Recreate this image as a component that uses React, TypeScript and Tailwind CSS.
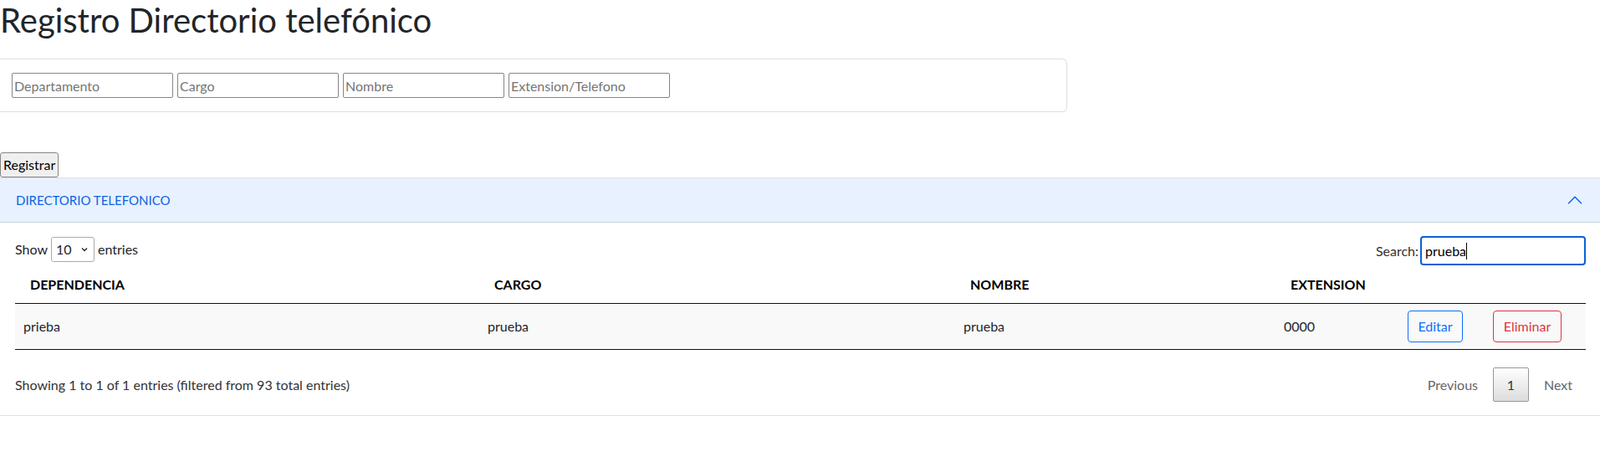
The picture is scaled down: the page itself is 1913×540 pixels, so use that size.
import * as React from 'react';

const cols = 'grid grid-cols-[555px_569px_383px_148px_102px_121px]';

const rows = [
  { dep: 'prieba', cargo: 'prueba', nombre: 'prueba', ext: '0000' },
];

export default function App() {
  return (
    <div className="min-h-[540px] bg-white text-[#212529] font-['Segoe_UI','Lato',sans-serif] text-[16px]">
      <h1 className="text-[40px] leading-[48px] font-normal">
        Registro Directorio telefónico
      </h1>

      {/* formulario */}
      <div className="mt-[22px] w-[1276px] h-[64px] border border-l-0 border-[#dfdfdf] rounded-r-[6px] pl-[14px] pt-[16px] flex gap-[5px]">
        {['Departamento', 'Cargo', 'Nombre', 'Extension/Telefono'].map((p) => (
          <input
            key={p}
            type="text"
            placeholder={p}
            className="w-[193px] h-[30px] border border-[#858585] rounded-[2px] px-[2px] text-[16px] placeholder:text-[#757575] outline-none"
          />
        ))}
      </div>

      <button
        type="button"
        className="mt-[48px] block h-[30px] px-[3px] bg-[#efefef] border border-[#858585] rounded-[3px] text-black text-[16px] leading-[24px]"
      >
        Registrar
      </button>

      {/* accordion */}
      <div className="border-t border-b border-[#dfdfdf]">
        <div className="h-[53px] bg-[#e7f1ff] border-b border-[#cad3df] flex items-center pl-[19px] pr-[20px] text-[#0c63e4] text-[15px]">
          <span>DIRECTORIO TELEFONICO</span>
          <svg className="ml-auto w-[20px] h-[20px]" viewBox="0 0 16 16" fill="none">
            <path d="M2 11L8 5L14 11" stroke="#0c63e4" strokeWidth="1.2" strokeLinecap="round" strokeLinejoin="round" />
          </svg>
        </div>

        <div className="px-[18px] pt-[16px] pb-[16px] w-[1914px]">
          <div className="w-[1878px] flex items-center justify-between h-[35px]">
            <div className="flex items-center gap-[4px] -mt-[4px]">
              <span>Show</span>
              <div className="w-[52px] h-[30px] border border-[#aaa] rounded-[3px] flex items-center pl-[5px] pr-[6px]">
                <span>10</span>
                <svg className="ml-auto w-[10px] h-[10px]" viewBox="0 0 10 10" fill="none">
                  <path d="M2 3.5L5 6.5L8 3.5" stroke="#222" strokeWidth="1.3" />
                </svg>
              </div>
              <span>entries</span>
            </div>
            <div className="flex items-center gap-[2px]">
              <span className="text-[#333]">Search:</span>
              <div className="w-[198px] h-[35px] border-[2px] border-[#0a61d6] rounded-[4px] flex items-center pl-[4px]">
                <span className="text-black">prueba</span>
                <span className="w-[1px] h-[20px] bg-black" />
              </div>
            </div>
          </div>

          {/* tabla */}
          <div className="w-[1878px] mt-[1px]">
            <div className={`${cols} border-b border-[#111] font-bold text-black`}>
              {['DEPENDENCIA', 'CARGO', 'NOMBRE', 'EXTENSION', '', ''].map((h, i) => (
                <div key={i} className="pl-[18px] py-[10px] leading-[24px] h-[44px]">
                  {h}
                </div>
              ))}
            </div>
            {rows.map((r) => (
              <div key={r.dep} className={`${cols} bg-[#f9f9f9] border-b border-[#111] items-center h-[55px]`}>
                <div className="pl-[10px]">{r.dep}</div>
                <div className="pl-[10px]">{r.cargo}</div>
                <div className="pl-[10px]">{r.nombre}</div>
                <div className="pl-[10px]">{r.ext}</div>
                <div className="pl-[10px]">
                  <button
                    type="button"
                    className="h-[38px] w-[66px] border border-[#0d6efd] text-[#0d6efd] rounded-[4px] bg-transparent"
                  >
                    Editar
                  </button>
                </div>
                <div className="pl-[10px]">
                  <button
                    type="button"
                    className="h-[38px] w-[82px] border border-[#dc3545] text-[#dc3545] rounded-[4px] bg-transparent"
                  >
                    Eliminar
                  </button>
                </div>
              </div>
            ))}
          </div>

          <div className="w-[1878px] flex items-center justify-between mt-[21px]">
            <div className="text-[#333]">Showing 1 to 1 of 1 entries (filtered from 93 total entries)</div>
            <div className="flex items-center text-[#666]">
              <span className="px-[16px] py-[8px]">Previous</span>
              <span className="w-[43px] h-[41px] flex items-center justify-center text-[#333] border border-[#979797] rounded-[2px] bg-gradient-to-b from-white to-[#dcdcdc] mx-[2px]">
                1
              </span>
              <span className="px-[16px] py-[8px]">Next</span>
            </div>
          </div>
        </div>
      </div>
    </div>
  );
}
